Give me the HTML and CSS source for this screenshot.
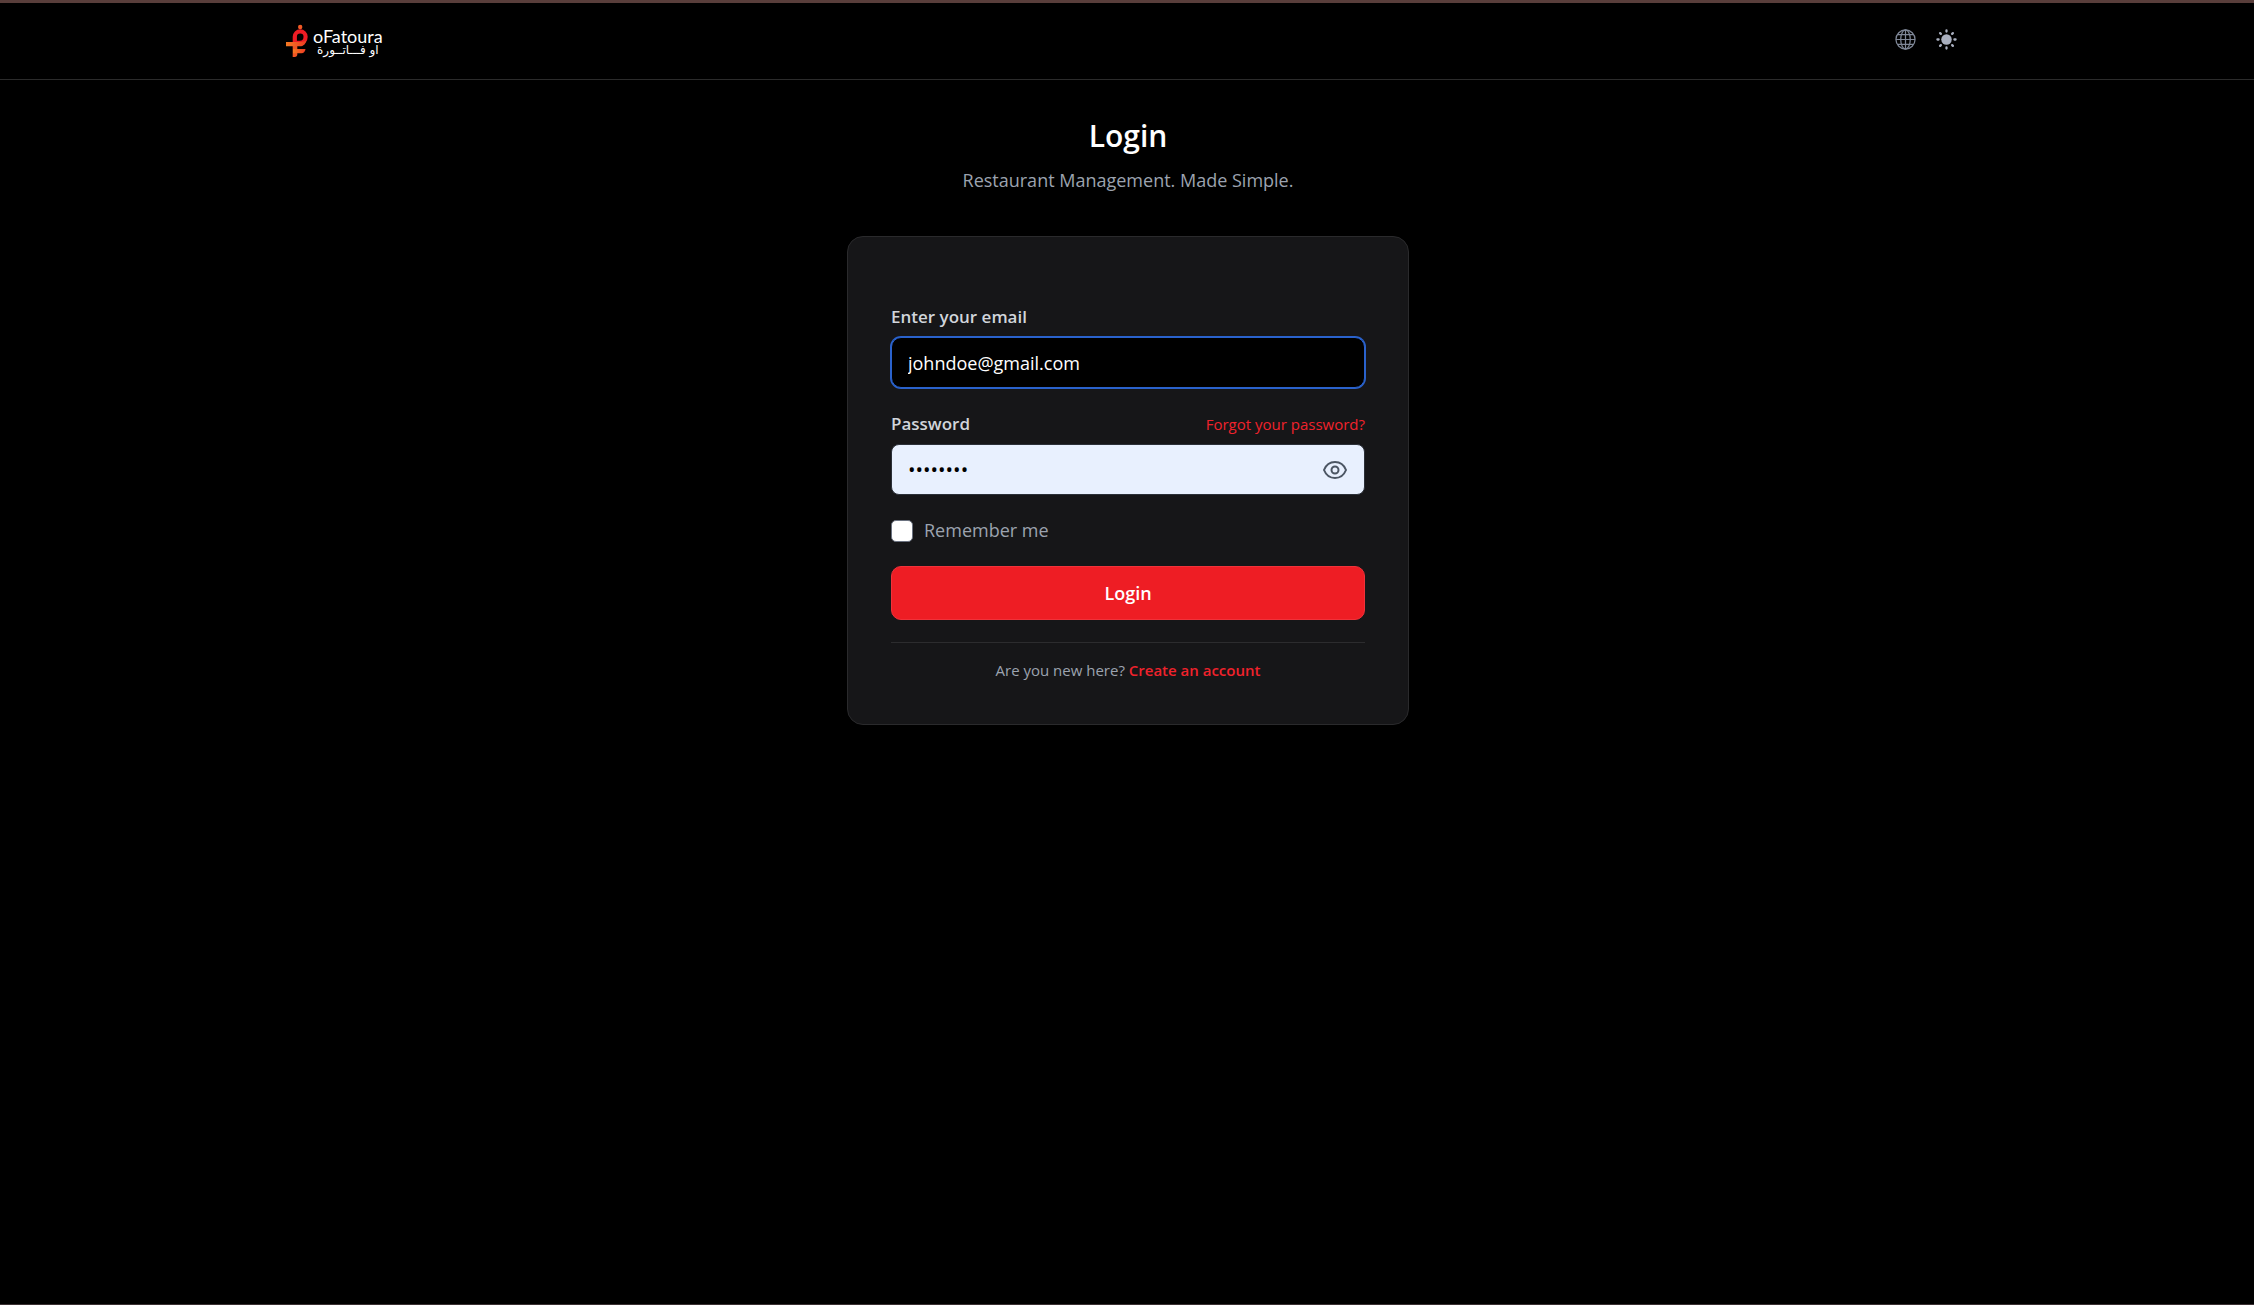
FILE: index.html
```html
<!DOCTYPE html>
<html lang="en">
<head>
    <meta charset="UTF-8">
    <meta name="viewport" content="width=device-width, initial-scale=1">
    <title>Login - oFatoura</title>
    <link rel="stylesheet" href="styles.css">
</head>
<body>
    <header class="header">
        <div class="header-inner">
            <a href="#" class="logo">
                <svg class="logo-mark" viewBox="0 0 22 34" aria-hidden="true">
                    <defs>
                        <linearGradient id="bar" x1="0" y1="0" x2="1" y2="0">
                            <stop offset="0" stop-color="#f47a22"/>
                            <stop offset="1" stop-color="#ee3a23"/>
                        </linearGradient>
                    </defs>
                    <circle cx="14.200" cy="3" r="2.200" fill="#f15a24"/>
                    <path d="M8.800 20v-7.200a5.400 5.400 0 0 1 10.800 0c0 3.600-2.200 6-5.600 6H9" fill="none" stroke="#ed1c24" stroke-width="4.200"/>
                    <path d="M0 18h15c2 0 4-.7 5.500-2-.8 4-3 6.300-6.500 6.300H0z" fill="url(#bar)"/>
                    <path d="M6.700 22h4.600v8.500c0 1.500-1 2.500-2.500 2.500H6.700z" fill="#f15523"/>
                    <path d="M7 25h12.500c-.3 2.600-1.700 4.300-4 4.300H7z" fill="url(#bar)"/>
                </svg>
                <span class="logo-text">
                    <span class="logo-name">oFatoura</span>
                    <span class="logo-arabic" lang="ar" dir="rtl">او فـــاتــورة</span>
                </span>
            </a>
            <div class="header-actions">
                <button type="button" class="icon-button" aria-label="Language">
                    <svg viewBox="0 0 22 22" fill="none" stroke="currentColor" stroke-width="1.300">
                        <circle cx="11" cy="11" r="10"/>
                        <ellipse cx="11" cy="11" rx="5" ry="10"/>
                        <path d="M11 1v20M1 11h20M2.500 6h17M2.500 16h17"/>
                    </svg>
                </button>
                <button type="button" class="icon-button sun" aria-label="Theme">
                    <svg viewBox="0 0 22 22" fill="currentColor" stroke="currentColor" stroke-width="2.400" stroke-linecap="round">
                        <circle cx="11" cy="11" r="5.500" stroke="none"/>
                        <path d="M11 1.500v1.200M11 19.300v1.200M1.500 11h1.200M19.300 11h1.200M4.300 4.300l.8.8M16.900 16.900l.8.8M4.300 17.700l.8-.8M16.900 5.100l.8-.8"/>
                    </svg>
                </button>
            </div>
        </div>
    </header>

    <main class="main">
        <h1 class="title">Login</h1>
        <p class="subtitle">Restaurant Management. Made Simple.</p>

        <div class="card">
            <form class="form">
                <div class="field">
                    <div class="field-head">
                        <label for="email">Enter your email</label>
                    </div>
                    <input type="email" id="email" class="input active" value="johndoe@gmail.com">
                </div>
                <div class="field">
                    <div class="field-head">
                        <label for="password">Password</label>
                        <a href="#" class="forgot">Forgot your password?</a>
                    </div>
                    <div class="password">
                        <input type="password" id="password" class="input filled" value="password">
                        <button type="button" class="eye" aria-label="Show password">
                            <svg viewBox="0 0 24 18" fill="none" stroke="currentColor" stroke-width="2">
                                <path d="M1 9C3 4 7 1 12 1s9 3 11 8c-2 5-6 8-11 8S3 14 1 9z"/>
                                <circle cx="12" cy="9" r="3.500"/>
                            </svg>
                        </button>
                    </div>
                </div>
                <div class="remember">
                    <input type="checkbox" id="remember" class="checkbox">
                    <label for="remember">Remember me</label>
                </div>
                <button type="submit" class="submit">Login</button>
            </form>
            <p class="signup">Are you new here? <a href="#">Create an account</a></p>
        </div>
    </main>

    <script>
        document.querySelector('.eye').addEventListener('click', function() {
            let input = document.getElementById('password');
            input.type = input.type === 'password' ? 'text' : 'password';
        });
    </script>
</body>
</html>
```
FILE: styles.css
```css
* {
    box-sizing: border-box;
}
body {
    display: flex;
    flex-direction: column;
    min-height: 100vh;
    margin: 0;
    background: #000;
    border-top: 3px solid #593e3b;
    border-bottom: 1px solid #3a3032;
    color: #9ca3af;
    font-family: "Segoe UI", "Open Sans", "Noto Sans", sans-serif;
    font-size: 18px;
    line-height: 26px;
}
a {
    color: #f0222c;
    text-decoration: none;
}
button,
input {
    font-family: inherit;
    font-size: inherit;
}
.header {
    border-bottom: 1px solid #2b2b2b;
}
.header-inner {
    display: flex;
    align-items: center;
    justify-content: space-between;
    height: 76px;
    max-width: 1690px;
    margin: 0 auto;
    padding: 0 15px 0 4px;
}
.logo {
    display: flex;
    align-items: center;
    gap: 5px;
    color: #fff;
}
.logo-mark {
    width: 22px;
    height: 34px;
}
.logo-text {
    display: flex;
    flex-direction: column;
    align-items: center;
    padding-top: 2px;
}
.logo-name {
    font-family: Lato, sans-serif;
    font-size: 18px;
    line-height: 16px;
}
.logo-arabic {
    font-family: "DejaVu Sans", sans-serif;
    font-size: 12px;
    line-height: 12px;
}
.header-actions {
    display: flex;
    gap: 20px;
    padding-bottom: 3px;
}
.icon-button {
    display: flex;
    padding: 0;
    border: 0;
    background: none;
    color: #7f8797;
    cursor: pointer;
}
.icon-button svg {
    width: 21px;
    height: 21px;
}
.sun {
    color: #a9afbf;
}
.main {
    display: flex;
    flex-direction: column;
    align-items: center;
    padding: 36px 16px 36px 18px;
}
.title {
    margin: 0;
    color: #fff;
    font-size: 30px;
    font-weight: 600;
    line-height: 40px;
}
.subtitle {
    margin: 11px 0 43px;
}
.card {
    width: 100%;
    max-width: 562px;
    padding: 68px 43px 41px;
    background: #161618;
    border: 1px solid #2a2a2c;
    border-radius: 16px;
}
.form {
    display: flex;
    flex-direction: column;
    gap: 24px;
    padding-bottom: 22px;
    border-bottom: 1px solid #2c2c2e;
}
.field-head {
    display: flex;
    align-items: center;
    justify-content: space-between;
    margin-bottom: 8px;
    line-height: 24px;
}
.field-head label {
    color: #d1d5db;
    font-size: 17px;
    font-weight: 600;
}
.forgot {
    font-size: 15px;
}
.input {
    display: block;
    width: 100%;
    height: 51px;
    padding: 0 16px;
    background: #000;
    border: 1px solid #2c3038;
    border-radius: 8px;
    color: #fff;
    outline: none;
}
.input.active,
.input:focus {
    border-color: #2a62cc;
    border-radius: 10px;
    box-shadow: 0 0 0 1px #2a62cc;
}
.input.filled {
    background: #e8f0fe;
    color: #000;
}
.input[type="password"] {
    font-size: 20px;
}
.password {
    position: relative;
}
.eye {
    position: absolute;
    top: 0;
    right: 18px;
    bottom: 0;
    display: flex;
    align-items: center;
    padding: 0;
    border: 0;
    background: none;
    color: #4b5563;
    cursor: pointer;
}
.eye svg {
    width: 24px;
    height: 18px;
}
.remember {
    display: flex;
    align-items: center;
    gap: 11px;
    line-height: 23px;
}
.checkbox {
    width: 22px;
    height: 22px;
    margin: 0;
    background: #fff;
    border: 1px solid #6b7280;
    border-radius: 5px;
    appearance: none;
}
.checkbox:checked {
    background: #ee1d24;
}
.submit {
    height: 54px;
    background: #ee1d24;
    border: 1px solid #f0323a;
    border-radius: 10px;
    color: #fff;
    font-weight: 600;
    cursor: pointer;
}
.signup {
    margin: 14px 0 0;
    text-align: center;
    font-size: 15px;
}
.signup a {
    font-weight: 600;
}
```
